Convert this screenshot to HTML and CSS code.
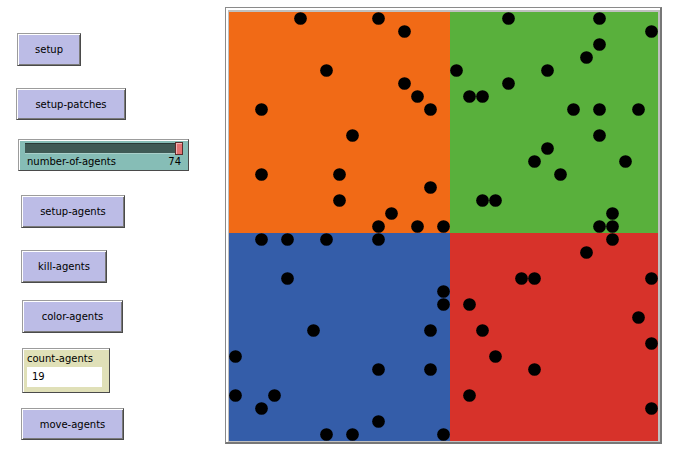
FILE: index.html
```html
<!DOCTYPE html>
<html>
  <head>
    <meta charset="UTF-8">
    <title>Interface</title>
    <link rel="stylesheet" href="styles.css">
  </head>
  <body>
    <div class="interface">
      <div class="widgets">
        <div class="button btn-setup">setup</div>
        <div class="button btn-patches">setup-patches</div>
        <div class="slider">
          <div class="track"><div class="handle"></div></div>
          <div class="slider-label"><span>number-of-agents</span><span>74</span></div>
        </div>
        <div class="button btn-agents">setup-agents</div>
        <div class="button btn-kill">kill-agents</div>
        <div class="button btn-color">color-agents</div>
        <div class="monitor">
          <div class="monitor-label">count-agents</div>
          <div class="monitor-value">19</div>
        </div>
        <div class="button btn-move">move-agents</div>
      </div>

      <div class="view">
        <div class="world">
          <svg width="429" height="429" viewBox="0 0 33 33">
            <g shape-rendering="crispEdges">
              <rect x="0" y="0" width="17" height="17" fill="#f16a16"/>
              <rect x="17" y="0" width="16" height="17" fill="#59b03c"/>
              <rect x="0" y="17" width="17" height="16" fill="#345da9"/>
              <rect x="17" y="17" width="16" height="16" fill="#d7322a"/>
            </g>
            <g fill="#000">
              <!-- row 0 -->
              <circle cx="5.5" cy="0.5" r="0.49"/>
              <circle cx="11.5" cy="0.5" r="0.49"/>
              <circle cx="21.5" cy="0.5" r="0.49"/>
              <circle cx="28.5" cy="0.5" r="0.49"/>
              <circle cx="13.5" cy="1.5" r="0.49"/>
              <circle cx="32.5" cy="1.5" r="0.49"/>
              <circle cx="28.5" cy="2.5" r="0.49"/>
              <circle cx="27.5" cy="3.5" r="0.49"/>
              <circle cx="7.5" cy="4.5" r="0.49"/>
              <circle cx="17.5" cy="4.5" r="0.49"/>
              <circle cx="24.5" cy="4.5" r="0.49"/>
              <circle cx="13.5" cy="5.5" r="0.49"/>
              <circle cx="21.5" cy="5.5" r="0.49"/>
              <circle cx="14.5" cy="6.5" r="0.49"/>
              <circle cx="18.5" cy="6.5" r="0.49"/>
              <circle cx="19.5" cy="6.5" r="0.49"/>
              <circle cx="2.5" cy="7.5" r="0.49"/>
              <circle cx="15.5" cy="7.5" r="0.49"/>
              <circle cx="26.5" cy="7.5" r="0.49"/>
              <circle cx="28.5" cy="7.5" r="0.49"/>
              <circle cx="31.5" cy="7.5" r="0.49"/>
              <circle cx="9.5" cy="9.5" r="0.49"/>
              <circle cx="28.5" cy="9.5" r="0.49"/>
              <circle cx="24.5" cy="10.5" r="0.49"/>
              <circle cx="23.5" cy="11.5" r="0.49"/>
              <circle cx="30.5" cy="11.5" r="0.49"/>
              <circle cx="2.5" cy="12.5" r="0.49"/>
              <circle cx="8.5" cy="12.5" r="0.49"/>
              <circle cx="25.5" cy="12.5" r="0.49"/>
              <circle cx="15.5" cy="13.5" r="0.49"/>
              <circle cx="8.5" cy="14.5" r="0.49"/>
              <circle cx="19.5" cy="14.5" r="0.49"/>
              <circle cx="20.5" cy="14.5" r="0.49"/>
              <circle cx="12.5" cy="15.5" r="0.49"/>
              <circle cx="29.5" cy="15.5" r="0.49"/>
              <circle cx="11.5" cy="16.5" r="0.49"/>
              <circle cx="14.5" cy="16.5" r="0.49"/>
              <circle cx="16.5" cy="16.5" r="0.49"/>
              <circle cx="28.5" cy="16.5" r="0.49"/>
              <circle cx="29.5" cy="16.5" r="0.49"/>
              <!-- bottom half -->
              <circle cx="2.5" cy="17.5" r="0.49"/>
              <circle cx="4.5" cy="17.5" r="0.49"/>
              <circle cx="7.5" cy="17.5" r="0.49"/>
              <circle cx="11.5" cy="17.5" r="0.49"/>
              <circle cx="29.5" cy="17.5" r="0.49"/>
              <circle cx="27.5" cy="18.5" r="0.49"/>
              <circle cx="4.5" cy="20.5" r="0.49"/>
              <circle cx="22.5" cy="20.5" r="0.49"/>
              <circle cx="23.5" cy="20.5" r="0.49"/>
              <circle cx="32.5" cy="20.5" r="0.49"/>
              <circle cx="16.5" cy="21.5" r="0.49"/>
              <circle cx="16.5" cy="22.5" r="0.49"/>
              <circle cx="18.5" cy="22.5" r="0.49"/>
              <circle cx="31.5" cy="23.5" r="0.49"/>
              <circle cx="6.5" cy="24.5" r="0.49"/>
              <circle cx="15.5" cy="24.5" r="0.49"/>
              <circle cx="19.5" cy="24.5" r="0.49"/>
              <circle cx="32.5" cy="25.5" r="0.49"/>
              <circle cx="0.5" cy="26.5" r="0.49"/>
              <circle cx="20.5" cy="26.5" r="0.49"/>
              <circle cx="11.5" cy="27.5" r="0.49"/>
              <circle cx="15.5" cy="27.5" r="0.49"/>
              <circle cx="23.5" cy="27.5" r="0.49"/>
              <circle cx="0.5" cy="29.5" r="0.49"/>
              <circle cx="3.5" cy="29.5" r="0.49"/>
              <circle cx="18.5" cy="29.5" r="0.49"/>
              <circle cx="2.5" cy="30.5" r="0.49"/>
              <circle cx="32.5" cy="30.5" r="0.49"/>
              <circle cx="11.5" cy="31.5" r="0.49"/>
              <circle cx="7.5" cy="32.5" r="0.49"/>
              <circle cx="9.5" cy="32.5" r="0.49"/>
              <circle cx="16.5" cy="32.5" r="0.49"/>
            </g>
          </svg>
        </div>
      </div>
    </div>
  </body>
</html>
```

FILE: styles.css
```css
body {
  margin: 0;
  background: #fff;
  font-family: "DejaVu Sans", sans-serif;
  font-size: 10px;
  color: #000;
}
.interface {
  display: flex;
  align-items: flex-start;
}
.widgets {
  width: 225px;
  padding-top: 33px;
}

/* buttons */
.button {
  box-sizing: border-box;
  height: 33px;
  display: flex;
  align-items: center;
  justify-content: center;
  background: #bcbce6;
  border: 1px solid;
  border-color: #9c9c9c #4a4a4a #4a4a4a #9c9c9c;
  box-shadow: inset 1px 1px #fff, inset -1px -1px #7a7a7a;
}
.btn-setup { margin-left: 17px; width: 64px; }
.btn-patches { margin: 22px 0 0 16px; width: 110px; height: 32px; }
.btn-agents { margin: 24px 0 0 21px; width: 104px; }
.btn-kill { margin: 22px 0 0 21px; width: 86px; }
.btn-color { margin: 17px 0 0 22px; width: 101px; }
.btn-move { margin: 15px 0 0 21px; width: 103px; height: 32px; }

/* slider */
.slider {
  box-sizing: border-box;
  margin: 19px 0 0 18px;
  width: 171px;
  height: 32px;
  background: #86bdb6;
  border: 1px solid;
  border-color: #9c9c9c #4a4a4a #4a4a4a #9c9c9c;
  box-shadow: inset 1px 1px #fff;
}
.track {
  position: relative;
  margin: 3px 5px 0 6px;
  height: 11px;
  background: #3f5a55;
  border-top: 1px solid #2a3b38;
  border-bottom: 1px solid #a9d0ca;
  box-sizing: border-box;
}
.handle {
  position: absolute;
  right: 0;
  top: -2px;
  width: 8px;
  height: 13px;
  box-sizing: border-box;
  background: #e27373;
  border: 1px solid #5a2c2c;
  box-shadow: inset 1px 1px #f4b4b4;
}
.slider-label {
  display: flex;
  justify-content: space-between;
  padding: 0 7px 0 8px;
  line-height: 14px;
  margin-top: 1px;
}

/* monitor */
.monitor {
  box-sizing: border-box;
  margin: 15px 0 0 22px;
  width: 88px;
  height: 45px;
  padding: 2px 0 0 4px;
  background: #e0e0b8;
  border: 1px solid;
  border-color: #9c9c9c #4a4a4a #4a4a4a #9c9c9c;
  box-shadow: inset 1px 1px #fff;
}
.monitor-label {
  line-height: 15px;
}
.monitor-value {
  margin-top: 1px;
  width: 75px;
  height: 20px;
  line-height: 20px;
  padding-left: 5px;
  box-sizing: border-box;
  background: #fff;
}

/* view */
.view {
  margin: 7px 0 0 0;
  padding: 2px 0 0 2px;
  background: #fff;
  border-top: 1px solid #8a8a8a;
  border-left: 1px solid #8a8a8a;
  border-right: 2px solid #777;
  border-bottom: 2px solid #777;
}
.world {
  border-top: 2px solid #c0c0c0;
  border-left: 1px solid #c0c0c0;
  border-right: 2px solid #c0c0c0;
  border-bottom: 1px solid #c0c0c0;
  line-height: 0;
}
.world svg {
  display: block;
}
```
